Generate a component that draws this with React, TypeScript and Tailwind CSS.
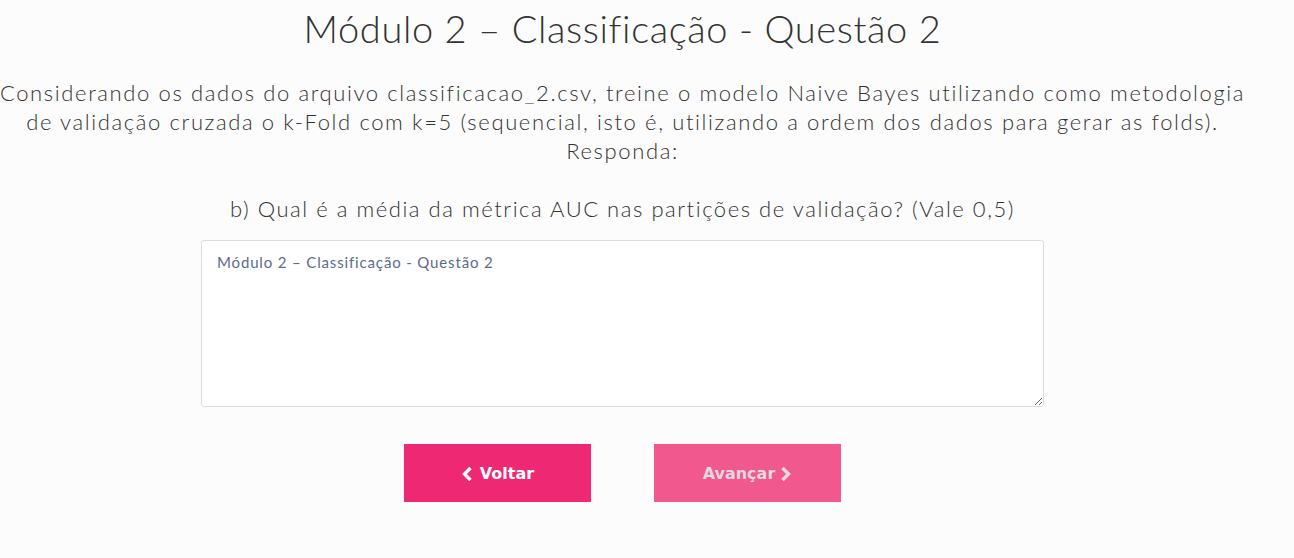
import React from "react";

export default function App() {
  return (
    <div className="min-h-[558px] w-full bg-[#fcfcfc] text-[#333333]" style={{ fontFamily: '"Lato", "Open Sans", sans-serif' }}>
      <div className="w-[1245px] flex flex-col items-center text-center">
        <h1 className="mt-[6px] text-[38px] leading-[44px] font-light tracking-[0.6px]">Módulo 2 – Classificação - Questão 2</h1>
        <p className="mt-[28px] text-[22px] leading-[29px] font-light tracking-[1.62px] whitespace-nowrap">
          Considerando os dados do arquivo classificacao_2.csv, treine o modelo Naive Bayes utilizando como metodologia
          <br />
          de validação cruzada o k-Fold com k=5 (sequencial, isto é, utilizando a ordem dos dados para gerar as folds).
          <br />
          Responda:
        </p>
        <p className="mt-[29px] text-[22px] leading-[29px] font-light tracking-[1.55px]">b) Qual é a média da métrica AUC nas partições de validação? (Vale 0,5)</p>
        <textarea
          className="mt-[17px] w-[843px] h-[167px] rounded-[3px] border border-[#dcdce6] bg-white px-[15px] py-[10px] text-[15px] font-normal tracking-[0.85px] text-[#5b6b8c] placeholder:text-[#5b6b8c] outline-none"
          placeholder="Módulo 2 – Classificação - Questão 2"
        />
        <div className="mt-[37px] flex gap-[63px]">
          <button className="w-[187px] h-[58px] bg-[#ef2873] text-white text-[16px] font-bold flex items-center justify-center gap-[7px] pt-[2px]" style={{ fontFamily: '"DejaVu Sans", sans-serif' }}>
            <svg width="12" height="16" viewBox="0 0 12 16"><path d="M9.5 2 L3.5 8 L9.5 14" stroke="white" strokeWidth="3.4" fill="none" /></svg>
            Voltar
          </button>
          <button className="w-[187px] h-[58px] bg-[#f0588e] text-[#e2d8dd] text-[16px] font-bold flex items-center justify-center gap-[5px] pt-[2px]" style={{ fontFamily: '"DejaVu Sans", sans-serif' }}>
            Avançar
            <svg width="12" height="16" viewBox="0 0 12 16"><path d="M2.5 2 L8.5 8 L2.5 14" stroke="#e2d8dd" strokeWidth="3.4" fill="none" /></svg>
          </button>
        </div>
      </div>
    </div>
  );
}
